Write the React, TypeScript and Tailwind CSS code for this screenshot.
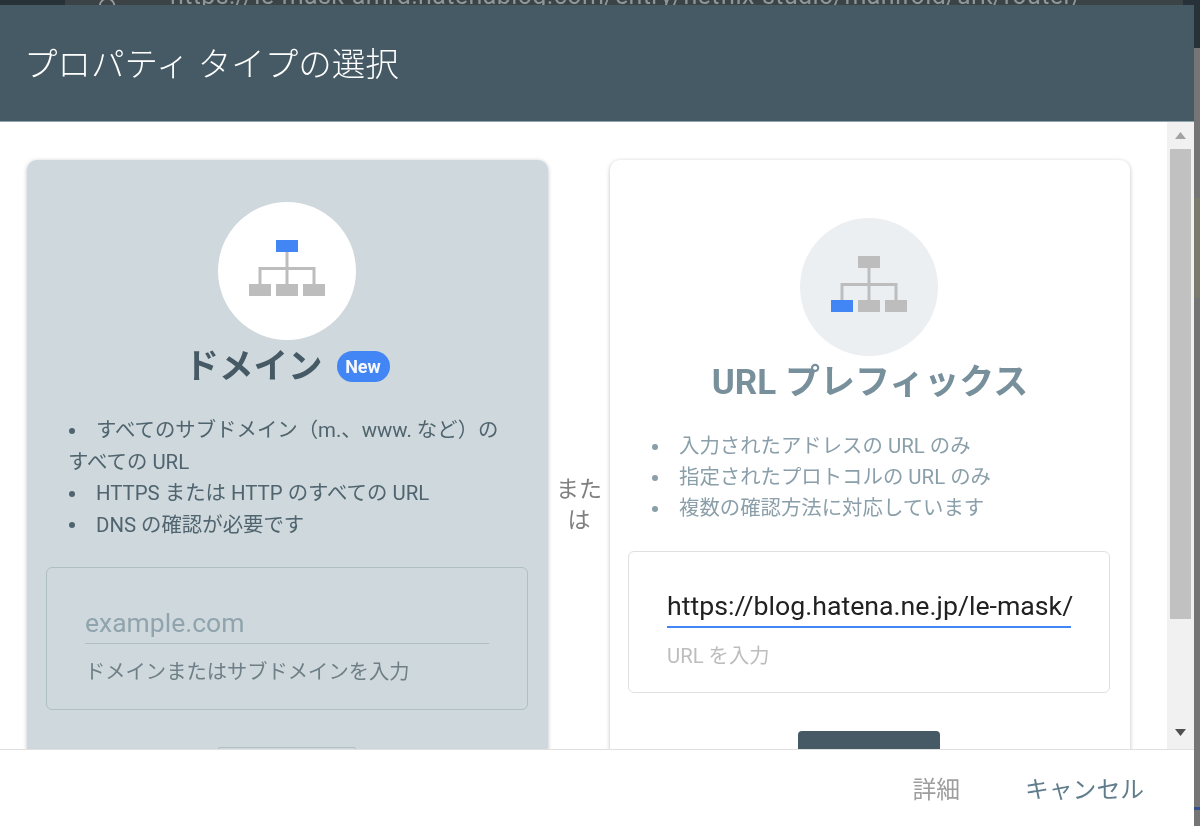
import React from 'react';
import { Search } from 'lucide-react';

// site hierarchy icon, `active` is the box drawn in blue
function SitemapIcon({ active }: { active: 'top' | 'left' }) {
  return (
    <svg className="-mt-[6px]" width="76" height="56" viewBox="0 0 76 56" fill="none">
      <path d="M38 12V44M38 28.5H11V44M38 28.5H65V44" stroke="#bdbdbd" strokeWidth="3" />
      <rect x="27" y="0" width="22" height="12" fill={active === 'top' ? '#4285f4' : '#bdbdbd'} />
      <rect x="0" y="44" width="22" height="12" fill={active === 'left' ? '#4285f4' : '#bdbdbd'} />
      <rect x="27" y="44" width="22" height="12" fill="#bdbdbd" />
      <rect x="54" y="44" width="22" height="12" fill="#bdbdbd" />
    </svg>
  );
}

function Bullet({ children }: { children: React.ReactNode }) {
  return (
    <li>
      <span className="mb-[2px] ml-[1px] mr-[21px] inline-block h-[6px] w-[6px] rounded-full bg-current align-middle" />
      {children}
    </li>
  );
}

export default function App() {
  return (
    <div className="flex h-[826px] w-[1200px] flex-col overflow-hidden bg-[#263238] font-['Roboto','Noto_Sans_CJK_JP',sans-serif] blur-[0.7px]">
      {/* Browser chrome peeking out above the dialog */}
      <div className="flex h-[5px] shrink-0 items-end overflow-hidden bg-[#3b4346]">
        <div className="h-full w-[65px] shrink-0 bg-[#263238]" />
        <div className="ml-[32px] -mb-[13px] w-[73px] shrink-0 text-[#9e9e9e]">
          <Search size={22} />
        </div>
        <div className="-mb-[1px] flex-1 overflow-hidden whitespace-nowrap text-[25px] leading-[20px] tracking-[0.4px] text-[#8f9699]">
          https://le-mask-amrd.hatenablog.com/entry/netflix-studio/manifold/urk/router/
        </div>
        <div className="h-full w-[17px] shrink-0 bg-[#263238]" />
      </div>

      <div className="flex min-h-0 flex-1">
        {/* Dialog */}
        <div className="flex w-[1194px] shrink-0 flex-col bg-white">
          <div className="flex h-[117px] shrink-0 items-center border-b border-[#90a4ae] bg-[#455a64] pl-[24px] pt-[3px]">
            <h1 className="text-[33.5px] font-light leading-[40px] text-white">プロパティ タイプの選択</h1>
          </div>

          <div className="flex min-h-0 flex-1 overflow-hidden">
            <div className="flex flex-1 items-start pl-[27px] pt-[38px]">
              {/* Domain card */}
              <div className="flex h-[690px] w-[521px] shrink-0 flex-col items-center rounded-[10px] bg-[#cfd8dc] pt-[42px] shadow-[0_1px_4px_rgba(0,0,0,0.25)]">
                <div className="mr-[1px] flex h-[138px] w-[138px] shrink-0 items-center justify-center rounded-full bg-white">
                  <SitemapIcon active="top" />
                </div>
                <div className="mr-[1px] mt-[6px] flex h-[40px] items-center gap-[14px]">
                  <h2 className="text-[34.5px] font-bold leading-[40px] text-[#455a64]">ドメイン</h2>
                  <span className="flex h-[31px] w-[53px] items-center justify-center rounded-full bg-[#4285f4] text-[18px] font-bold text-[#f5f8ff]">
                    New
                  </span>
                </div>
                <ul className="mt-[29px] w-full pl-[41px] pr-[40px] text-[20.4px] leading-[31.5px] text-[#4f646e]">
                  <Bullet>すべてのサブドメイン（m.、www. など）の すべての URL</Bullet>
                  <Bullet>HTTPS または HTTP のすべての URL</Bullet>
                  <Bullet>DNS の確認が必要です</Bullet>
                </ul>
                <div className="mt-[26px] mr-[1px] h-[143px] w-[482px] shrink-0 rounded-[6px] border border-[#b0bec5] px-[38px] pt-[40px]">
                  <div className="h-[36px] border-b border-[#b0bec5] text-[26.5px] leading-[30px] text-[#90a4ae]">
                    example.com
                  </div>
                  <div className="mt-[13px] text-[20.3px] leading-[30px] text-[#6f7f87]">
                    ドメインまたはサブドメインを入力
                  </div>
                </div>
                <div className="mt-[37px] mr-[1px] h-[50px] w-[138px] shrink-0 rounded-[2px] border border-[#b0bec5]" />
              </div>

              {/* or */}
              <div className="flex h-[690px] w-[62px] shrink-0 items-center justify-center px-[5px] text-center text-[23px] leading-[31px] text-[#808080]">
                または
              </div>

              {/* URL prefix card */}
              <div className="flex h-[690px] w-[520px] shrink-0 flex-col items-center rounded-[10px] bg-white pt-[58px] shadow-[0_1px_4px_rgba(0,0,0,0.25)]">
                <div className="mr-[2px] flex h-[138px] w-[138px] shrink-0 items-center justify-center rounded-full bg-[#eceff1]">
                  <SitemapIcon active="left" />
                </div>
                <h2 className="mt-[7px] text-[35px] font-bold leading-[40px] text-[#78909c]">URL プレフィックス</h2>
                <ul className="mt-[28px] w-full pl-[41px] pr-[40px] text-[20.4px] leading-[31px] text-[#8a9fa9]">
                  <Bullet>入力されたアドレスの URL のみ</Bullet>
                  <Bullet>指定されたプロトコルの URL のみ</Bullet>
                  <Bullet>複数の確認方法に対応しています</Bullet>
                </ul>
                <div className="mt-[27px] mr-[2px] h-[142px] w-[482px] shrink-0 rounded-[6px] border border-[#e0e0e0] px-[38px] pt-[39px]">
                  <div className="h-[37px] whitespace-nowrap border-b-2 border-[#4285f4] text-[26.7px] leading-[30px] text-[#212121]">
                    https://blog.hatena.ne.jp/le-mask/
                  </div>
                  <div className="mt-[13px] text-[20.3px] leading-[30px] text-[#bdbdbd]">URL を入力</div>
                </div>
                <div className="mt-[38px] mr-[2px] h-[50px] w-[142px] shrink-0 rounded-[4px] bg-[#455a64]" />
              </div>
            </div>

            {/* Scrollbar */}
            <div className="flex w-[27px] shrink-0 flex-col bg-[#f1f1f1]">
              <div className="flex h-[27px] shrink-0 items-center justify-center">
                <svg width="11" height="7" viewBox="0 0 11 7"><path d="M5.5 0L11 7H0Z" fill="#a3a3a3" /></svg>
              </div>
              <div className="ml-[3px] h-[470px] w-[21px] shrink-0 bg-[#c1c1c1]" />
              <div className="flex flex-1 items-end justify-center pb-[13px]">
                <svg width="11" height="7" viewBox="0 0 11 7"><path d="M0 0H11L5.5 7Z" fill="#505050" /></svg>
              </div>
            </div>
          </div>

          <div className="flex h-[77px] shrink-0 items-center justify-end border-t border-[#e0e0e0] bg-white pr-[50px] pt-[6px] text-[23.8px]">
            <span className="mr-[65px] text-[#9e9e9e]">詳細</span>
            <span className="text-[#607d8b]">キャンセル</span>
          </div>
        </div>

        {/* Page behind the dialog, right edge */}
        <div className="flex flex-1 flex-col">
          <div className="h-[43px] shrink-0 bg-[#263238]" />
          <div className="h-[150px] shrink-0 bg-[#757575]" />
          <div className="h-[100px] shrink-0 bg-[#7b7a6e]" />
          <div className="h-[509px] shrink-0 bg-[#757575]" />
          <div className="h-[3px] shrink-0 bg-[#2f4f8f]" />
          <div className="flex-1 bg-[#757575]" />
        </div>
      </div>
    </div>
  );
}
